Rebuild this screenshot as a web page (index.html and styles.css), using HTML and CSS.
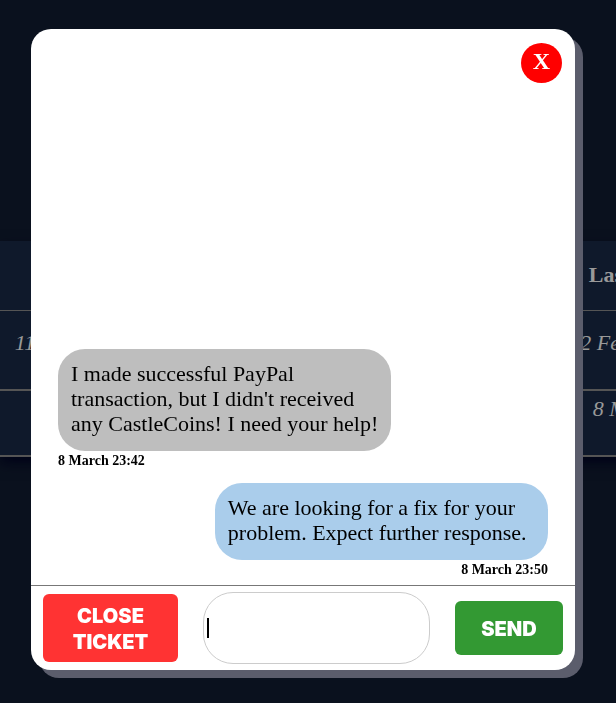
FILE: index.html
```html
<!DOCTYPE html>
<html lang="en">
<head>
<meta charset="utf-8">
<meta name="viewport" content="width=device-width, initial-scale=1">
<title>Support ticket</title>
<link rel="stylesheet" href="styles.css">
</head>
<body>
<main class="page">
  <table class="tickets">
    <thead>
      <tr><th class="first"></th><th></th><th class="last">Last edit</th></tr>
    </thead>
    <tbody>
      <tr class="tall"><td class="first">11</td><td></td><td class="last">2 February</td></tr>
      <tr><td class="first"></td><td></td><td class="last">8 March</td></tr>
    </tbody>
  </table>
</main>
<div class="overlay">
  <section class="chat" role="dialog" aria-label="Ticket conversation">
    <header class="chat-header">
      <button class="close" type="button" aria-label="Close">X</button>
    </header>
    <div class="messages">
      <article class="message">
        <p class="bubble">I made successful PayPal transaction, but I didn't received any CastleCoins! I need your help!</p>
        <time class="time">8 March 23:42</time>
      </article>
      <article class="message reply">
        <p class="bubble">We are looking for a fix for your problem. Expect further response.</p>
        <time class="time">8 March 23:50</time>
      </article>
    </div>
    <form class="composer">
      <button class="button danger" type="button">CLOSE TICKET</button>
      <label class="field"><input class="input" type="text" aria-label="Message"></label>
      <button class="button send" type="button">SEND</button>
    </form>
  </section>
</div>
</body>
</html>
```
FILE: styles.css
```css
* {
  box-sizing: border-box;
}

body {
  margin: 0;
  background: #0a111e;
  font-family: "Liberation Serif", "Times New Roman", serif;
  font-size: 22px;
  line-height: 25px;
}

.page {
  min-height: 100vh;
  padding-top: 241px;
  overflow: hidden;
}

.tickets {
  width: calc(100% + 64px);
  table-layout: fixed;
  border-collapse: separate;
  border-spacing: 0;
  background: #0f192b;
  box-shadow: 0 6px 12px #000318;
  color: #999;
  white-space: nowrap;
}

.tickets th {
  height: 70px;
  padding: 0 0 2px;
  border-bottom: 1px solid #555;
}

.tickets td {
  height: 66px;
  padding: 5px 0 0;
  border-bottom: 2px solid #555;
  font-style: italic;
  vertical-align: top;
}

.tickets .tall td {
  height: 80px;
  padding-top: 19px;
}

.tickets .first {
  width: 50px;
  text-align: center;
}

.tickets .last {
  width: 100px;
  text-align: center;
}

.overlay {
  position: fixed;
  inset: 0;
  display: flex;
  padding: 29px 41px 33px 31px;
}

.chat {
  flex: 1;
  display: flex;
  flex-direction: column;
  min-width: 0;
  background: #fff;
  border-radius: 20px;
  box-shadow: 8px 8px 0 #5b5d6c;
}

.chat-header {
  display: flex;
  justify-content: flex-end;
  padding: 14px 13px 0;
}

.close {
  width: 41px;
  height: 40px;
  padding: 0 0 3px;
  border: 0;
  border-radius: 50%;
  background: #f00;
  color: #fff;
  font: bold 24px/25px "Liberation Serif", "Times New Roman", serif;
}

.messages {
  flex: 1;
  display: flex;
  flex-direction: column;
  justify-content: flex-end;
  gap: 12px;
  padding: 0 27px 5px;
}

.message {
  display: flex;
  flex-direction: column;
  align-items: flex-start;
}

.reply {
  align-items: flex-end;
}

.bubble {
  width: 68%;
  margin: 0;
  padding: 12px 8px 15px 13px;
  border-radius: 27px;
  background: #bebebe;
}

.reply .bubble {
  background: #aacdeb;
}

.time {
  font-size: 14px;
  font-weight: bold;
  line-height: 20px;
}

.composer {
  display: flex;
  align-items: center;
  gap: 25px;
  padding: 6px 12px;
  border-top: 1px solid #777;
}

.button {
  border: 0;
  border-radius: 6px;
  color: #fff;
  font: 900 20px/26px Inter, "Arial Black", sans-serif;
}

.danger {
  width: 135px;
  padding: 9px 20px 7px;
  background: #f33;
}

.send {
  width: 108px;
  padding: 15px 14px 13px;
  background: #393;
}

.field {
  position: relative;
  flex: 1;
  display: flex;
  min-width: 0;
}

/* Text cursor shown in the empty message box. */
.field::before {
  content: "";
  position: absolute;
  top: 26px;
  left: 4px;
  width: 2px;
  height: 20px;
  background: #000;
}

.input {
  width: 100%;
  height: 72px;
  padding: 0 4px;
  border: 1px solid #ccc;
  border-radius: 30px;
  background: #fff;
  font: inherit;
  outline: 0;
}
```
